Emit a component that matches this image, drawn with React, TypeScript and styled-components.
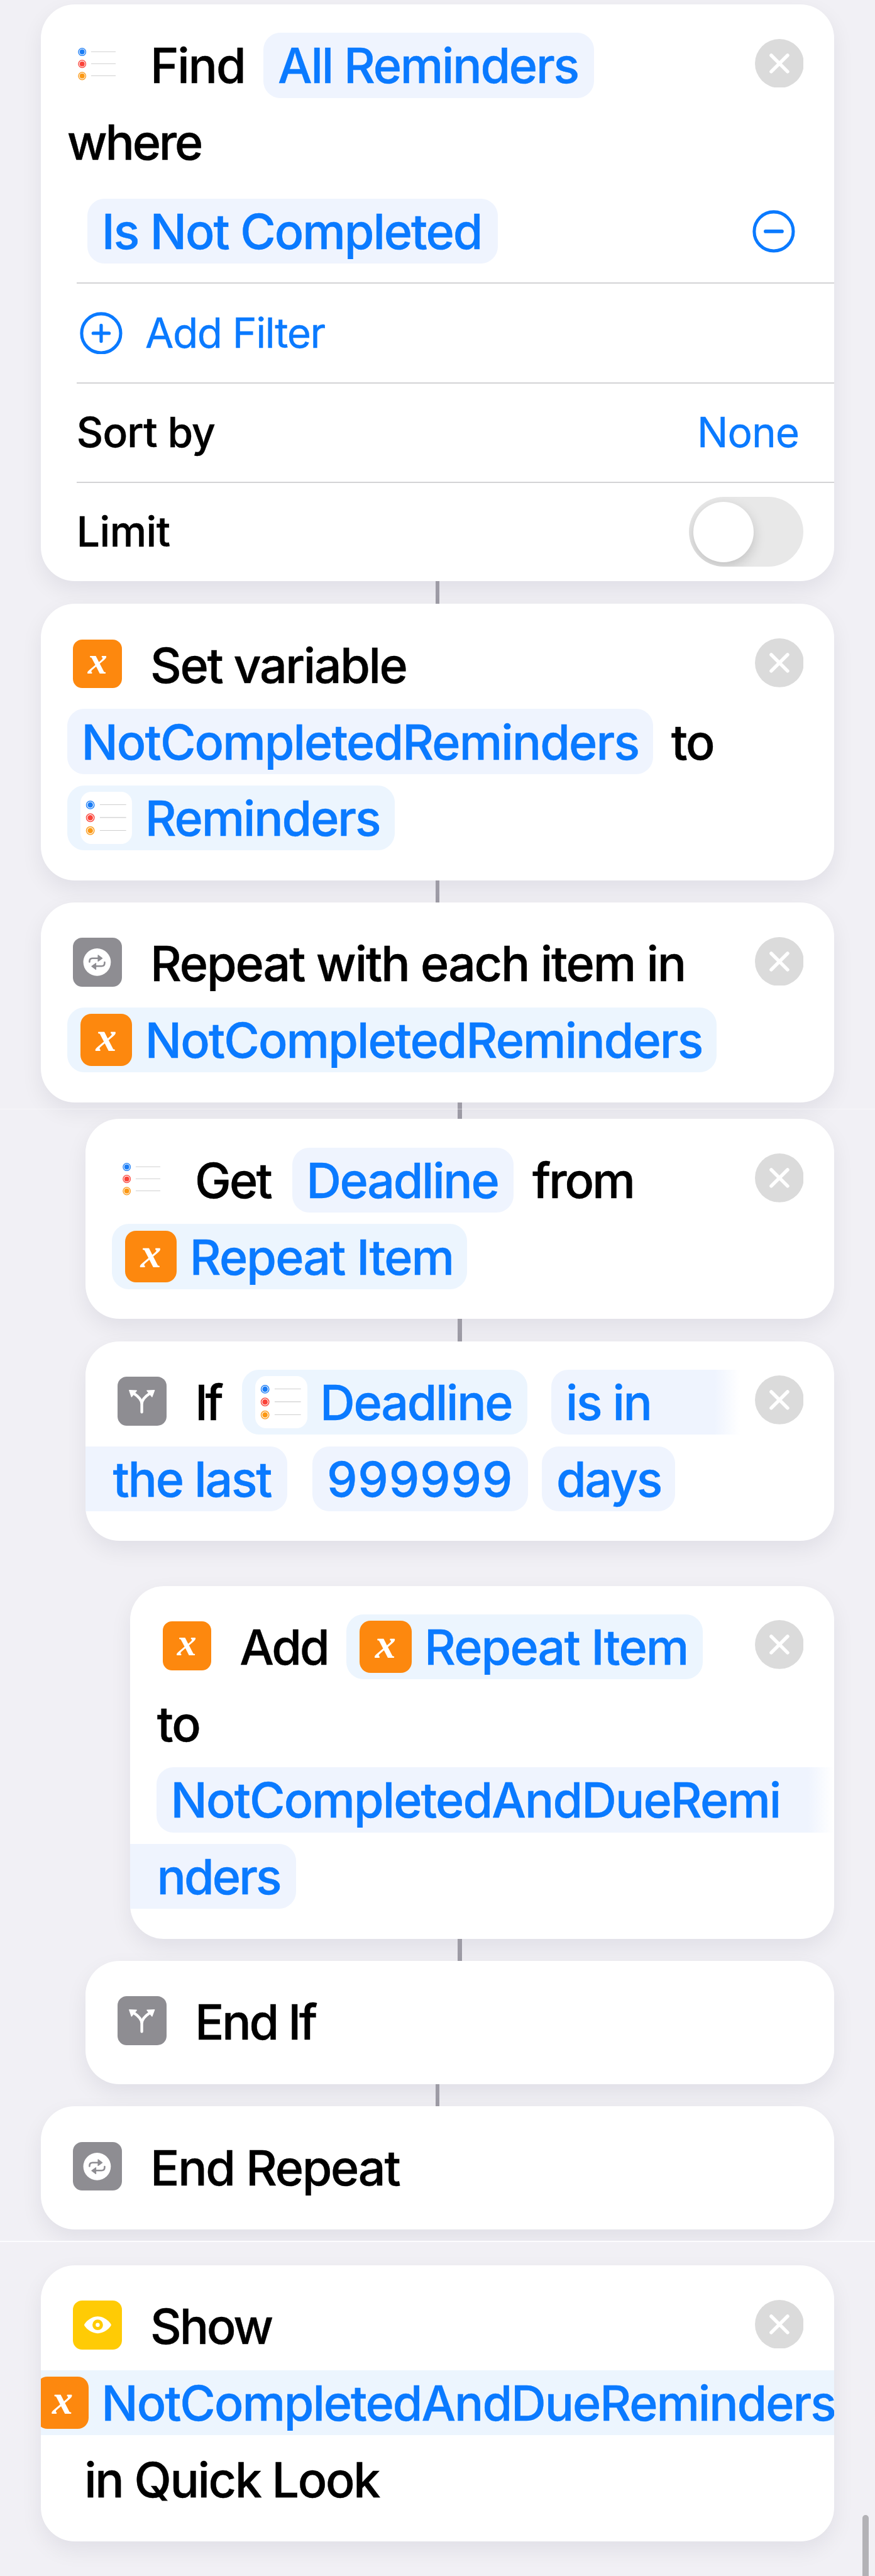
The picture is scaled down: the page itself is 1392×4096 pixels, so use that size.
import React from "react";
import styled, { createGlobalStyle, css } from "styled-components";

// Design units are scaled down to window pixels.
const SCALE = 0.87;
const u = (n: number) => `${+(n * SCALE).toFixed(2)}px`;

const color = {
  page: "#f1f0f5",
  card: "#ffffff",
  blue: "#0a7aff",
  pill: "#eff4fe",
  variable: "#ecf5fe",
  grey: "#8e8d92",
  orange: "#fd880e",
  yellow: "#ffcb05",
  close: "#dbdbdb",
  line: "#9e9ca6",
  divider: "#d3d3d5",
};

const GlobalStyle = createGlobalStyle`
  * { box-sizing: border-box; }
  body { margin: 0; background: ${color.page}; }
`;

const Page = styled.main`
  position: relative;
  display: flex;
  flex-direction: column;
  width: 1392px;
  height: 4096px;
  padding-top: ${u(8)};
  overflow: hidden;
  background: ${color.page};
  color: #000;
  font-family: Inter, "Liberation Sans", sans-serif;
  font-size: ${u(88.7)};
  font-weight: 500;
  white-space: nowrap;
  -webkit-text-stroke: 0.4px currentColor;
`;

const Card = styled.section<{ $level?: number }>`
  position: relative;
  flex: none;
  display: flex;
  flex-direction: column;
  margin-left: ${(p) => u(74.5 + 81.7 * (p.$level ?? 0))};
  margin-right: ${u(74.5)};
  padding: ${u(41.5)} 0 ${u(44)};
  border-radius: ${u(62)};
  background: ${color.card};
  box-shadow: 0 ${u(16)} ${u(40)} rgba(20, 15, 40, 0.07);
`;

const Clip = styled.div`
  overflow: hidden;
`;

const Line = styled.div<{ $flush?: boolean; $shift?: number }>`
  display: flex;
  align-items: center;
  height: ${u(139.8)};
  padding-left: ${(p) => u(p.$flush ? 0 : 48.3)};
  ${(p) =>
    p.$shift !== undefined &&
    css`
      padding-left: ${u(48.3 + p.$shift)};
    `}
`;

const Word = styled.span<{ $ls?: number; $ml?: number }>`
  flex: none;
  line-height: 1.21;
  padding-top: ${u(3)};
  letter-spacing: ${(p) => p.$ls ?? -0.028}em;
  margin-left: ${(p) => u(p.$ml ?? 0)};
`;

const Pill = styled.span<{ $w: number; $ml?: number; $variable?: boolean; $pad?: number; $edge?: "start" | "end" }>`
  flex: none;
  display: flex;
  align-items: center;
  width: ${(p) => u(p.$w)};
  height: ${u(119)};
  margin-left: ${(p) => u(p.$ml ?? 0)};
  padding-left: ${(p) => u(p.$pad ?? (p.$variable ? 24 : 26))};
  border-radius: ${u(31)};
  background: ${(p) => (p.$variable ? color.variable : color.pill)};
  color: ${color.blue};
  ${(p) =>
    p.$edge === "end" &&
    css`
      border-radius: ${u(31)} 0 0 ${u(31)};
      background: linear-gradient(to right, ${color.pill} calc(100% - ${u(46)}), rgba(239, 244, 254, 0));
    `}
  ${(p) =>
    p.$edge === "start" &&
    css`
      border-radius: 0 ${u(31)} ${u(31)} 0;
    `}
`;

const OverflowPill = styled(Pill)`
  margin-left: ${u(-31.5)};
  border-radius: ${u(31)};
`;

const Tile = styled.span<{ $bg: string; $inPill?: boolean }>`
  flex: none;
  display: flex;
  align-items: center;
  justify-content: center;
  width: ${(p) => u(p.$inPill ? 95 : 89)};
  height: ${(p) => u(p.$inPill ? 95 : 89)};
  margin: ${(p) => (p.$inPill ? `0 ${u(23.5)} 0 0` : `0 ${u(52)} ${u(4)} ${u(11)}`)};
  border-radius: ${(p) => u(p.$inPill ? 20 : 17)};
  background: ${(p) => p.$bg};
  svg {
    display: block;
    width: 100%;
    height: 100%;
  }
`;

const Glyph = styled.span<{ $inPill?: boolean }>`
  color: #fff;
  font: italic 700 ${(p) => u(p.$inPill ? 76 : 71)} / 1 "Liberation Serif", serif;
  padding-bottom: ${u(11)};
  -webkit-text-stroke: 0;
`;

const CloseButton = styled.span`
  position: absolute;
  top: ${u(62.8)};
  right: ${u(56)};
  width: ${u(89.5)};
  height: ${u(89.5)};
  svg {
    display: block;
    width: 100%;
    height: 100%;
  }
`;

const Row = styled.div<{ $h: number; $pl: number; $pr: number; $first?: boolean }>`
  display: flex;
  align-items: center;
  height: ${(p) => u(p.$h)};
  margin-left: ${u(65.5)};
  padding: 0 ${(p) => u(p.$pr)} 0 ${(p) => u(p.$pl)};
  border-top: ${(p) => (p.$first ? "none" : `2px solid ${color.divider}`)};
`;

const FindCard = styled(Card)`
  height: ${u(1054)};
  padding-bottom: 0;
`;

const Label = styled.span<{ $blue?: boolean; $ls?: number }>`
  font-size: ${u(75.6)};
  font-weight: ${(p) => (p.$blue ? 400 : 500)};
  line-height: 1.21;
  letter-spacing: ${(p) => p.$ls ?? -0.012}em;
  color: ${(p) => (p.$blue ? color.blue : "#000")};
`;

const End = styled.span`
  flex: none;
  display: flex;
  margin-left: auto;
`;

const RoundIcon = styled.svg`
  flex: none;
  display: block;
  width: ${u(78)};
  height: ${u(78)};
`;

const AddFilter = styled.span`
  display: flex;
  align-items: center;
  gap: ${u(41)};
`;

const Switch = styled.span`
  width: ${u(209.5)};
  height: ${u(127.5)};
  padding: ${u(8.5)};
  border-radius: ${u(64)};
  background: #e8e8e8;
  overflow: hidden;
`;

const Knob = styled.span`
  display: block;
  width: ${u(110.5)};
  height: ${u(110.5)};
  border-radius: 50%;
  background: #fff;
  box-shadow: 0 ${u(8)} ${u(22)} rgba(0, 0, 0, 0.17);
`;

const Gap = styled.div<{ $h: number }>`
  position: relative;
  flex: none;
  height: ${(p) => u(p.$h)};
`;

const Connector = styled.div<{ $nested?: boolean }>`
  width: ${u(8)};
  height: 100%;
  margin-left: ${(p) => u(p.$nested ? 836.8 : 796)};
  background: ${color.line};
`;

const SeamGap = styled(Gap)`
  padding-top: ${u(20)};
`;

const Seam = styled.div`
  height: 100%;
  border-top: 2px solid #fcfcfe;
  background: ${color.page};
`;

const FaintSeam = styled.div`
  position: absolute;
  top: ${u(12)};
  left: 0;
  right: 0;
  height: 1px;
  background: rgba(255, 255, 255, 0.45);
`;

const Scrollbar = styled.div`
  position: absolute;
  top: ${u(4596.5)};
  right: ${u(11)};
  width: ${u(12)};
  height: ${u(140)};
  border-radius: ${u(6)};
  background: #b3b2b6;
`;

const Close = () => (
  <CloseButton>
    <svg viewBox="0 0 90 90">
      <circle cx="45" cy="45" r="45" fill={color.close} />
      <path d="M30 30 60 60M60 30 30 60" stroke="#fff" strokeWidth="6.4" strokeLinecap="round" />
    </svg>
  </CloseButton>
);

const VariableTile = ({ inPill }: { inPill?: boolean }) => (
  <Tile $bg={color.orange} $inPill={inPill}>
    <Glyph $inPill={inPill}>x</Glyph>
  </Tile>
);

const RemindersTile = ({ inPill }: { inPill?: boolean }) => (
  <Tile $bg="#fff" $inPill={inPill}>
    <svg viewBox="0 0 95 95">
      {[
        { y: 24, c: "#1a7cf5" },
        { y: 47.4, c: "#fa4238" },
        { y: 71, c: "#fb9814" },
      ].map(({ y, c }) => (
        <g key={y}>
          <circle cx="18" cy={y} r="7.1" fill="none" stroke={c} strokeWidth="1.8" opacity="0.9" />
          <circle cx="18" cy={y} r="4.9" fill={c} />
          <path d={`M35.5 ${y - 0.4}H83.5`} stroke="#cfcfcf" strokeWidth="1.2" />
        </g>
      ))}
    </svg>
  </Tile>
);

const RepeatTile = () => (
  <Tile $bg={color.grey}>
    <svg viewBox="0 0 267 267">
      <circle cx="132.5" cy="134" r="75.5" fill="#fff" />
      <g fill="none" stroke={color.grey} strokeWidth="9" strokeLinecap="round">
        <path d="M91 133V130Q91 113 108 113H140" />
        <path d="M174 135V138Q174 156 157 156H125" />
      </g>
      <g fill={color.grey} stroke={color.grey} strokeWidth="4" strokeLinejoin="round">
        <path d="M138 96V129L161 113Z" />
        <path d="M126 140V174L103 157Z" />
      </g>
    </svg>
  </Tile>
);

const BranchTile = () => (
  <Tile $bg={color.grey}>
    <svg viewBox="0 0 267 267">
      <path
        d="M133 194V150C133 125 108 104 88 91M133 150C133 125 158 104 178 91"
        fill="none"
        stroke="#fff"
        strokeWidth="15"
        strokeLinecap="round"
      />
      <g fill="#fff" stroke="#fff" strokeWidth="5" strokeLinejoin="round">
        <path d="M65 75 104 77 77 110Z" />
        <path d="M202 75 162 77 189 110Z" />
      </g>
    </svg>
  </Tile>
);

const EyeTile = () => (
  <Tile $bg={color.yellow}>
    <svg viewBox="0 0 267 267">
      <path d="M62 134C62 126 95 87 136 87S210 126 210 134 177 180 136 180 62 142 62 134Z" fill="#fff" />
      <circle cx="136" cy="133.5" r="20" fill="none" stroke={color.yellow} strokeWidth="18" />
    </svg>
  </Tile>
);

export default function App() {
  return (
    <Page>
      <GlobalStyle />

      <FindCard>
        <Line>
          <RemindersTile />
          <Word>Find</Word>
          <Pill $w={604} $ml={34.5}>
            <Word $ls={-0.0294}>All Reminders</Word>
          </Pill>
        </Line>
        <Line>
          <Word $ls={-0.042}>where</Word>
        </Line>
        <Row $first $h={188} $pl={20} $pr={72}>
          <Pill $w={750}>
            <Word $ls={-0.0267}>Is Not Completed</Word>
          </Pill>
          <End>
            <RoundIcon viewBox="0 0 78 78" fill="none" stroke={color.blue} strokeLinecap="round">
              <circle cx="39" cy="39" r="35.7" strokeWidth="5.8" />
              <path d="M24 39H54" strokeWidth="6.5" />
            </RoundIcon>
          </End>
        </Row>
        <Row $h={182} $pl={6.5} $pr={60}>
          <AddFilter>
            <RoundIcon viewBox="0 0 78 78" fill="none" stroke={color.blue} strokeLinecap="round">
              <circle cx="39" cy="39" r="35.7" strokeWidth="5.8" />
              <path d="M24.5 39H53.5M39 24.5V53.5" strokeWidth="6" />
            </RoundIcon>
            <Label $blue $ls={-0.0212}>
              Add Filter
            </Label>
          </AddFilter>
        </Row>
        <Row $h={182} $pl={0} $pr={64.5}>
          <Label>Sort by</Label>
          <End>
            <Label $blue $ls={-0.0156}>
              None
            </Label>
          </End>
        </Row>
        <Row $h={182} $pl={0} $pr={56.5}>
          <Label $ls={-0.0065}>Limit</Label>
          <End>
            <Switch>
              <Knob />
            </Switch>
          </End>
        </Row>
        <Close />
      </FindCard>

      <Gap $h={42}>
        <Connector />
      </Gap>

      <Card>
        <Line>
          <VariableTile />
          <Word $ls={-0.031}>Set variable</Word>
        </Line>
        <Line>
          <Pill $w={1071.5}>
            <Word $ls={-0.0249}>NotCompletedReminders</Word>
          </Pill>
          <Word $ml={33}>to</Word>
        </Line>
        <Line>
          <Pill $variable $w={598.5}>
            <RemindersTile inPill />
            <Word>Reminders</Word>
          </Pill>
        </Line>
        <Close />
      </Card>

      <Gap $h={40.5}>
        <Connector />
      </Gap>

      <Card>
        <Line>
          <RepeatTile />
          <Word $ls={-0.0275}>Repeat with each item in</Word>
        </Line>
        <Line>
          <Pill $variable $w={1187}>
            <VariableTile inPill />
            <Word $ls={-0.0249}>NotCompletedReminders</Word>
          </Pill>
        </Line>
        <Close />
      </Card>

      <Gap $h={31}>
        <FaintSeam />
        <Connector $nested />
      </Gap>

      <Card $level={1}>
        <Line>
          <RemindersTile />
          <Word $ls={-0.036}>Get</Word>
          <Pill $w={405} $ml={38.5}>
            <Word $ls={-0.0301}>Deadline</Word>
          </Pill>
          <Word $ml={34.5} $ls={-0.0388}>
            from
          </Word>
        </Line>
        <Line>
          <Pill $variable $w={650}>
            <VariableTile inPill />
            <Word $ls={-0.0245}>Repeat Item</Word>
          </Pill>
        </Line>
        <Close />
      </Card>

      <Gap $h={41}>
        <Connector $nested />
      </Gap>

      <Card $level={1}>
        <Line>
          <BranchTile />
          <Word $ls={-0.06}>If</Word>
          <Pill $variable $w={522} $ml={39}>
            <RemindersTile inPill />
            <Word $ls={-0.0301}>Deadline</Word>
          </Pill>
          <Pill $w={344} $ml={44} $edge="end">
            <Word $ls={-0.0313}>is in</Word>
          </Pill>
        </Line>
        <Line $flush>
          <Pill $w={369.5} $pad={50} $edge="start">
            <Word $ls={-0.0287}>the last</Word>
          </Pill>
          <Pill $w={393.5} $ml={46}>
            <Word $ls={0.0099}>999999</Word>
          </Pill>
          <Pill $w={243.7} $ml={26}>
            <Word $ls={-0.0294}>days</Word>
          </Pill>
        </Line>
        <Close />
      </Card>

      <Gap $h={82} />

      <Card $level={2}>
        <Line>
          <VariableTile />
          <Word $ls={-0.0395}>Add</Word>
          <Pill $variable $w={651} $ml={34}>
            <VariableTile inPill />
            <Word $ls={-0.0245}>Repeat Item</Word>
          </Pill>
        </Line>
        <Line>
          <Word $ml={1}>to</Word>
        </Line>
        <Line>
          <Pill $w={1237} $edge="end">
            <Word $ls={-0.0251}>NotCompletedAndDueRemi</Word>
          </Pill>
        </Line>
        <Line $flush>
          <Pill $w={303} $pad={49} $edge="start">
            <Word $ls={-0.0382}>nders</Word>
          </Pill>
        </Line>
        <Close />
      </Card>

      <Gap $h={40.5}>
        <Connector $nested />
      </Gap>

      <Card $level={1}>
        <Line>
          <BranchTile />
          <Word $ls={-0.0425}>End If</Word>
        </Line>
      </Card>

      <Gap $h={41}>
        <Connector />
      </Gap>

      <Card>
        <Line>
          <RepeatTile />
          <Word $ls={-0.0298}>End Repeat</Word>
        </Line>
      </Card>

      <SeamGap $h={65}>
        <Seam />
      </SeamGap>

      <Card>
        <Line>
          <EyeTile />
          <Word $ls={-0.04}>Show</Word>
        </Line>
        <Clip>
          <Line $flush>
            <OverflowPill $variable $w={1540}>
              <VariableTile inPill />
              <Word $ls={-0.0268}>NotCompletedAndDueReminders</Word>
            </OverflowPill>
          </Line>
        </Clip>
        <Line $shift={31.5}>
          <Word $ls={-0.0309}>in Quick Look</Word>
        </Line>
        <Close />
      </Card>

      <Scrollbar />
    </Page>
  );
}
